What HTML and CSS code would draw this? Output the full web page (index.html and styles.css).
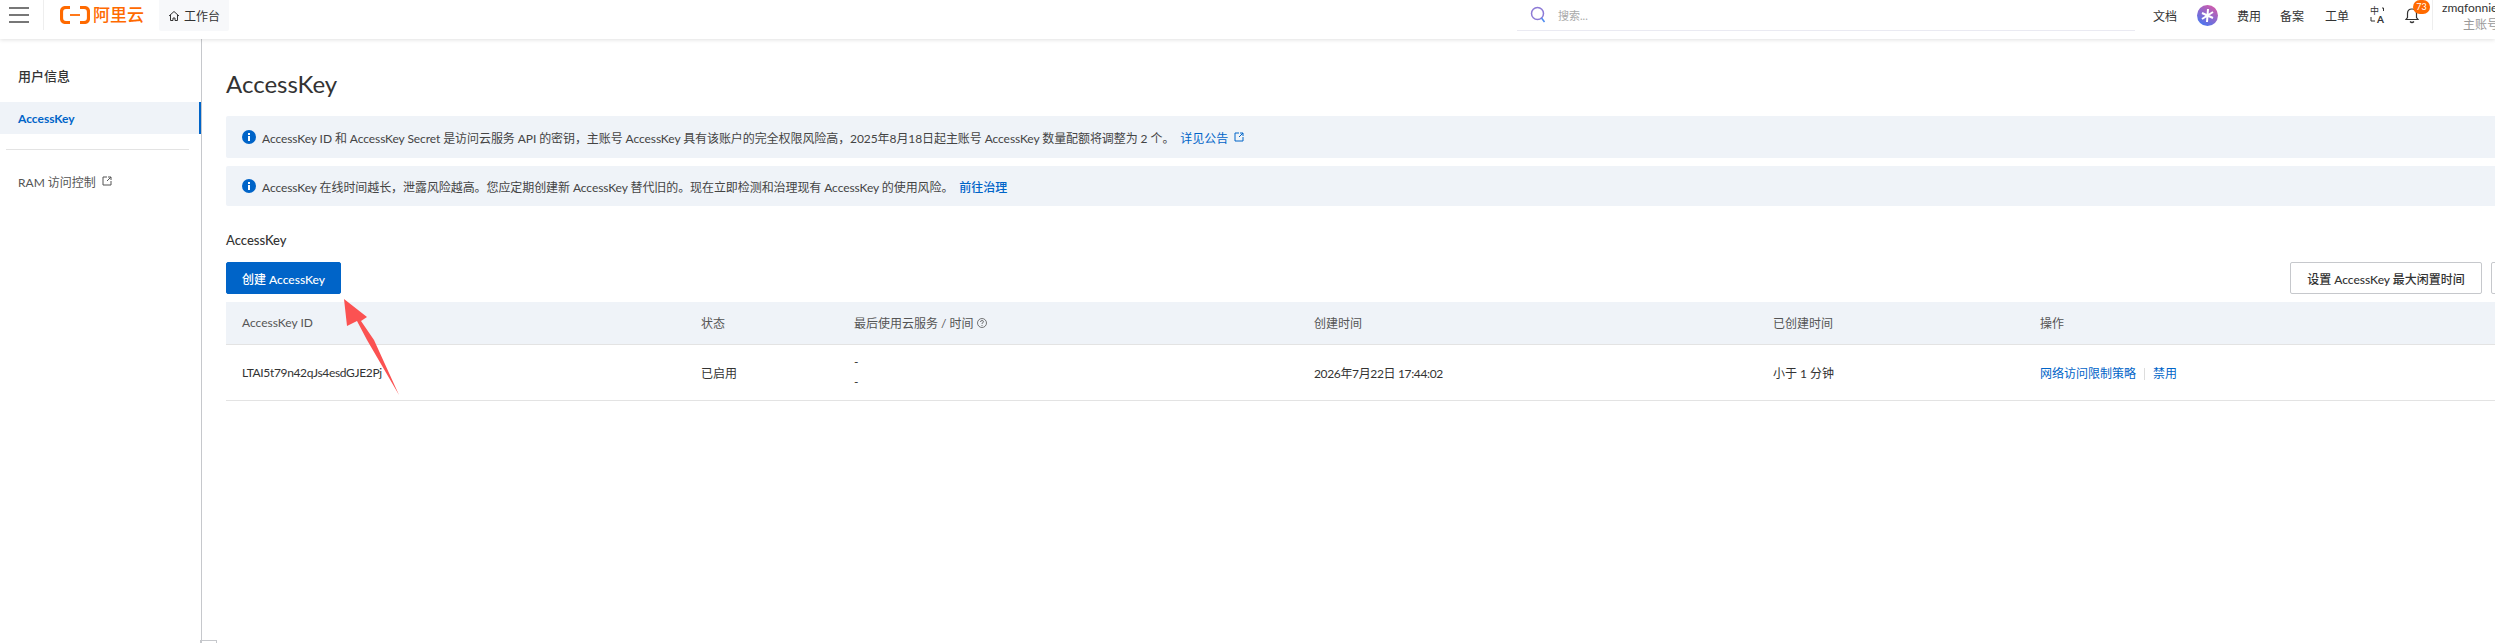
FILE: index.html
```html
<!DOCTYPE html>
<html lang="zh-CN">
<head>
    <meta charset="UTF-8">
    <title>AccessKey</title>
    <link rel="stylesheet" href="styles.css">
</head>
<body>
    <header class="topbar">
        <div class="menu-btn"><span></span><span></span><span></span></div>
        <div class="logo">
            <svg width="30" height="18" viewBox="0 0 30 18"><path d="M10 1.500H6Q1.500 1.500 1.500 6V12Q1.500 16.500 6 16.500H10M20 1.500H24Q28.500 1.500 28.500 6V12Q28.500 16.500 24 16.500H20" fill="none" stroke="#ff6a00" stroke-width="3.200"/><path d="M10 9H20" stroke="#ff6a00" stroke-width="1.800"/></svg>
            <span class="logo-text">阿里云</span>
        </div>
        <div class="workbench">
            <svg width="12" height="12" viewBox="0 0 12 12"><path d="M1 6L6 1.500L11 6M2.500 5V10.500H5V8H7V10.500H9.500V5" fill="none" stroke="#333" stroke-width="1"/></svg>
            工作台
        </div>
        <div class="search">
            <svg width="16" height="18" viewBox="0 0 16 18"><circle cx="7.500" cy="7.500" r="6" fill="none" stroke="#8d7ad6" stroke-width="1.500"/><path d="M11.500 12L14.500 16" stroke="#4e8cf0" stroke-width="1.500"/></svg>
            <span>搜索...</span>
        </div>
        <nav class="topnav">
            <span class="nav-doc">文档</span>
            <svg class="ai-dot" width="21" height="21" viewBox="0 0 21 21">
                <defs><linearGradient id="ai" x1="0.800" y1="0" x2="0.200" y2="1"><stop offset="0" stop-color="#d65aa8"/><stop offset="1" stop-color="#4477f2"/></linearGradient></defs>
                <circle cx="10.500" cy="10.500" r="10.500" fill="url(#ai)"/>
                <path d="M11 4L10 17M5 8L16 13M16 7L5 14" stroke="#fff" stroke-width="2"/>
            </svg>
            <span class="nav-fee">费用</span>
            <span class="nav-item">备案</span>
            <span class="nav-item">工单</span>
            <svg class="lang" width="16" height="20" viewBox="0 0 16 20">
                <text x="0" y="9" font-size="9" fill="#333">中</text>
                <text x="7" y="18" font-size="10" font-weight="700" fill="#333">A</text>
                <path d="M12 3H13.500V6M1 12V16H5" fill="none" stroke="#333" stroke-width="1"/>
            </svg>
            <span class="bell">
                <svg width="14" height="17" viewBox="0 0 14 17"><path d="M1 12.500H13L11.500 10.500V6.500Q11.500 2 7 2Q2.500 2 2.500 6.500V10.500ZM5 14.500Q7 16.500 9 14.500" fill="none" stroke="#333" stroke-width="1.200"/></svg>
                <i class="badge">73</i>
            </span>
            <div class="account">
                <div class="account-name">zmqfonnie</div>
                <div class="account-type">主账号</div>
            </div>
        </nav>
    </header>

    <div class="layout">
        <aside class="sidebar">
            <h3 class="side-title">用户信息</h3>
            <a class="side-item active">AccessKey</a>
            <div class="side-divider"></div>
            <a class="side-item">RAM 访问控制
                <svg width="10" height="10" viewBox="0 0 10 10"><path d="M5 1H1V9H9V5M6 1H9V4M9 1L5 5" fill="none" stroke="#555" stroke-width="1"/></svg>
            </a>
            <div class="side-collapse"></div>
        </aside>

        <main class="content">
            <h1 class="page-title">AccessKey</h1>

            <div class="alert alert-first">
                <svg width="14" height="14" viewBox="0 0 14 14"><circle cx="7" cy="7" r="7" fill="#0064c8"/><rect x="6" y="3" width="2" height="2" fill="#fff"/><rect x="6" y="6" width="2" height="5" fill="#fff"/></svg>
                <span class="alert-text">AccessKey ID 和 AccessKey Secret 是访问云服务 API 的密钥，主账号 AccessKey 具有该账户的完全权限风险高，2025年8月18日起主账号 AccessKey 数量配额将调整为 2 个。</span>
                <a class="link notice">详见公告
                    <svg width="10" height="10" viewBox="0 0 10 10"><path d="M5 1H1V9H9V5M6 1H9V4M9 1L5 5" fill="none" stroke="#0064c8" stroke-width="1"/></svg>
                </a>
            </div>
            <div class="alert alert-second">
                <svg width="14" height="14" viewBox="0 0 14 14"><circle cx="7" cy="7" r="7" fill="#0064c8"/><rect x="6" y="3" width="2" height="2" fill="#fff"/><rect x="6" y="6" width="2" height="5" fill="#fff"/></svg>
                <span class="alert-text">AccessKey 在线时间越长，泄露风险越高。您应定期创建新 AccessKey 替代旧的。现在立即检测和治理现有 AccessKey 的使用风险。</span>
                <a class="link strong">前往治理</a>
            </div>

            <h2 class="section-title">AccessKey</h2>
            <div class="toolbar">
                <button class="btn btn-primary">创建 AccessKey</button>
                <div class="toolbar-right">
                    <button class="btn btn-idle">设置 AccessKey 最大闲置时间</button>
                    <button class="btn btn-icon"></button>
                </div>
            </div>

            <table class="key-table">
                <colgroup>
                    <col class="col-id"><col class="col-state"><col class="col-last"><col class="col-created"><col class="col-age"><col>
                </colgroup>
                <thead>
                    <tr>
                        <th>AccessKey ID</th>
                        <th>状态</th>
                        <th>最后使用云服务 / 时间
                            <svg width="10" height="10" viewBox="0 0 10 10"><circle cx="5" cy="5" r="4.500" fill="none" stroke="#555" stroke-width="0.800"/><path d="M3.500 4Q3.500 2.500 5 2.500Q6.500 2.500 6.500 3.800Q6.500 4.600 5 5.300V6M5 7V8" fill="none" stroke="#555" stroke-width="0.800"/></svg>
                        </th>
                        <th>创建时间</th>
                        <th>已创建时间</th>
                        <th>操作</th>
                    </tr>
                </thead>
                <tbody>
                    <tr>
                        <td class="tight">LTAI5t79n42qJs4esdGJE2Pj</td>
                        <td>已启用</td>
                        <td><div class="dash">-</div><div class="dash">-</div></td>
                        <td class="tight">2026年7月22日 17:44:02</td>
                        <td>小于 1 分钟</td>
                        <td><a class="link">网络访问限制策略</a><i class="sep"></i><a class="link">禁用</a></td>
                    </tr>
                </tbody>
            </table>
        </main>
    </div>

    <svg class="arrow" width="60" height="100" viewBox="0 0 60 100"><polygon points="1,1 24,19 18,23 31,42 56,97 24,42 14,23 4,28" fill="#fb5252"/></svg>
</body>
</html>
```

FILE: styles.css
```css
* {
    margin: 0;
    padding: 0;
    box-sizing: border-box;
}

html, body {
    height: 100%;
    overflow: hidden;
}

body {
    background-color: #fff;
    color: #333;
    font-family: Lato, "Noto Sans CJK SC", sans-serif;
    font-size: 12px;
    display: flex;
    flex-direction: column;
}

svg {
    flex: none;
}

.link {
    color: #0064c8;
}

/* top bar */
.topbar {
    flex: none;
    height: 39px;
    display: flex;
    align-items: flex-start;
    background-color: #fff;
    box-shadow: 0 1px 4px rgba(0, 0, 0, 0.12);
    z-index: 1;
}

.menu-btn {
    width: 44px;
    height: 30px;
    padding: 7px 14px 0 9px;
    border-right: 1px solid #eee;
}

.menu-btn span {
    display: block;
    height: 2px;
    background-color: #777;
    margin-bottom: 5px;
}

.logo {
    display: flex;
    align-items: center;
    gap: 3px;
    height: 30px;
    margin-left: 16px;
    width: 99px;
}

.logo-text {
    color: #ff6a00;
    font-size: 17px;
    font-weight: 500;
    line-height: 30px;
}

.workbench {
    display: flex;
    align-items: center;
    gap: 4px;
    width: 70px;
    height: 31px;
    padding-left: 9px;
    background-color: #f7f8fa;
    border-radius: 0 0 2px 2px;
}

.search {
    display: flex;
    align-items: center;
    gap: 12px;
    width: 618px;
    height: 31px;
    margin-left: 1288px;
    padding-left: 13px;
    border-bottom: 1px solid #eaeaf2;
    color: #aaa;
    font-size: 11px;
}

.topnav {
    display: flex;
    height: 30px;
    align-items: center;
    flex: 1;
    min-width: 0;
}

.nav-doc { margin-left: 18px; width: 44px; }
.nav-fee { width: 43px; }
.nav-item { width: 45px; }

.ai-dot {
    margin-right: 19px;
}

.lang {
    margin-right: 19px;
}

.bell {
    position: relative;
    display: flex;
    width: 27px;
}

.badge {
    position: absolute;
    left: 8px;
    top: -7px;
    width: 17px;
    height: 14px;
    border-radius: 7px;
    background-color: #ff6a00;
    color: #fff;
    font-size: 9px;
    font-style: normal;
    line-height: 14px;
    text-align: center;
}

.account {
    height: 30px;
    padding-left: 9px;
    border-left: 1px solid #eee;
    white-space: nowrap;
    overflow: hidden;
    flex: 1;
    min-width: 0;
}

.account-name {
    font-size: 12px;
    line-height: 15px;
}

.account-type {
    color: #999;
    font-size: 12px;
    line-height: 19px;
    padding-left: 21px;
}

/* layout */
.layout {
    flex: 1;
    display: flex;
    min-height: 0;
}

.sidebar {
    flex: none;
    position: relative;
    width: 202px;
    padding-top: 27px;
    border-right: 1px solid #c6c8cc;
}

.side-title {
    padding-left: 18px;
    font-size: 13px;
    font-weight: 500;
    line-height: 20px;
    margin-bottom: 16px;
}

.side-item {
    display: flex;
    align-items: center;
    gap: 6px;
    height: 32px;
    padding-left: 18px;
    color: #555;
}

.side-item.active {
    background-color: #eff3f8;
    border-right: 2px solid #0064c8;
    color: #0064c8;
    font-weight: 700;
}

.side-divider {
    height: 1px;
    margin: 15px 12px 15px 6px;
    background-color: #e3e3e3;
}

.side-collapse {
    position: absolute;
    left: 200px;
    bottom: -1px;
    width: 17px;
    height: 4px;
    border: 1px solid #c6c8cc;
}

.content {
    flex: none;
    width: 2400px;
    padding: 0 24px;
}

.page-title {
    height: 77px;
    padding-top: 25px;
    font-size: 24px;
    font-weight: 400;
    line-height: 40px;
}

/* alerts */
.alert {
    display: flex;
    align-items: center;
    gap: 6px;
    padding-left: 16px;
    background-color: #eff3f8;
    border-radius: 2px;
    color: #444;
}

.alert-text {
    letter-spacing: -0.08px;
}

.alert-first {
    height: 42px;
    margin-bottom: 8px;
}

.alert-second {
    height: 40px;
}

.notice {
    display: flex;
    align-items: center;
    gap: 6px;
}

.strong {
    font-weight: 500;
}

.section-title {
    margin-top: 24px;
    font-size: 13px;
    font-weight: 500;
    line-height: 20px;
}

/* toolbar */
.toolbar {
    display: flex;
    justify-content: space-between;
    margin-top: 12px;
}

.toolbar-right {
    display: flex;
    gap: 9px;
    margin-right: 21px;
}

.btn {
    height: 32px;
    background-color: #fff;
    border: 1px solid #c6c8cc;
    border-radius: 2px;
    color: #333;
    font-family: inherit;
    font-size: 12px;
    font-weight: 500;
    white-space: nowrap;
}

.btn-primary {
    width: 115px;
    background-color: #0064c8;
    border-color: #0064c8;
    color: #fff;
}

.btn-idle {
    width: 192px;
}

.btn-icon {
    width: 66px;
}

/* table */
.key-table {
    width: 100%;
    margin-top: 8px;
    table-layout: fixed;
    border-collapse: collapse;
}

.col-id { width: 459px; }
.col-state { width: 153px; }
.col-last { width: 460px; }
.col-created { width: 459px; }
.col-age { width: 267px; }

.key-table th {
    height: 42px;
    padding-left: 16px;
    background-color: #eff3f8;
    border-bottom: 1px solid #e3e3e3;
    font-weight: 400;
    text-align: left;
    color: #555;
}

.key-table td {
    height: 56px;
    padding-left: 16px;
    border-bottom: 1px solid #e3e3e3;
}

.key-table .tight {
    letter-spacing: -0.35px;
}

.dash {
    line-height: 20px;
}

.sep {
    display: inline-block;
    width: 1px;
    height: 12px;
    margin: 0 8px;
    background-color: #ddd;
    vertical-align: -2px;
}

/* arrow drawn over the page */
.arrow {
    position: absolute;
    left: 343px;
    top: 298px;
}
```
